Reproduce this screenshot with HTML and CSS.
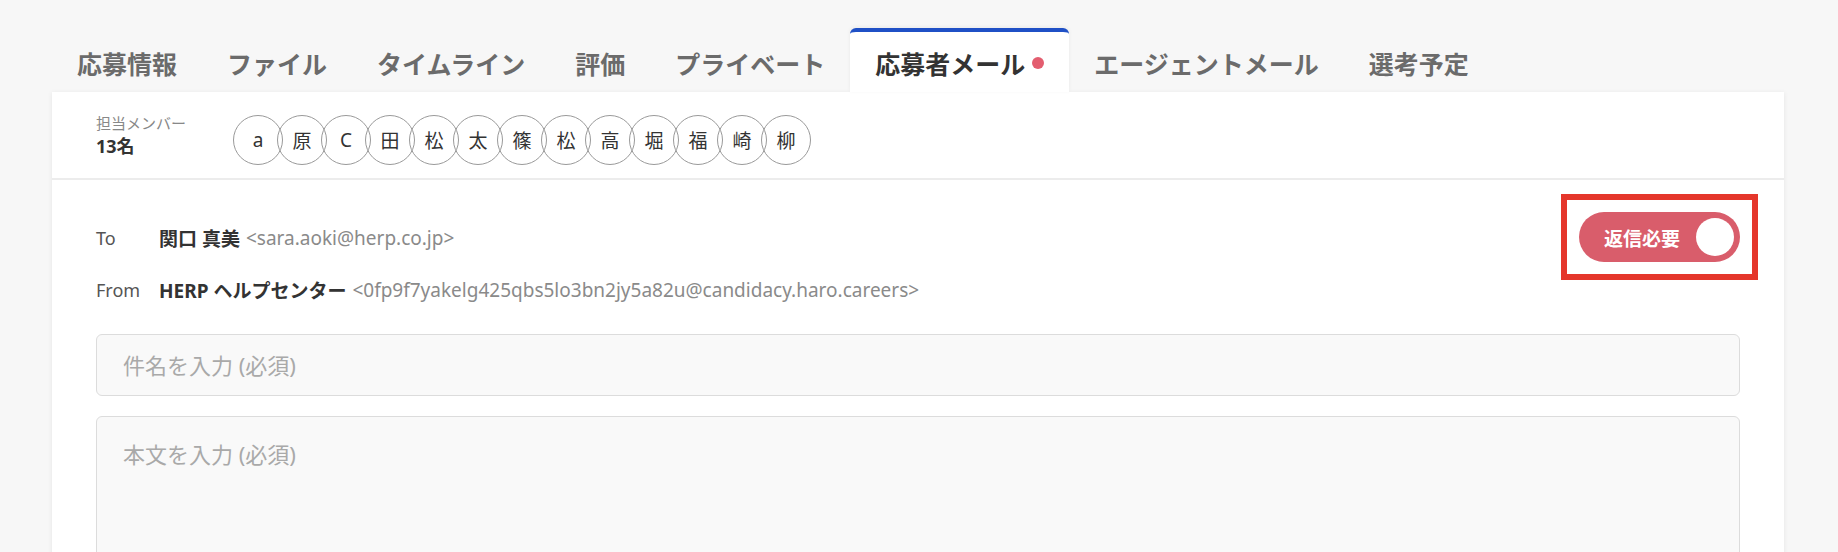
FILE: index.html
```html
<!DOCTYPE html>
<html lang="ja">
<head>
    <meta charset="UTF-8">
    <meta name="viewport" content="width=device-width, initial-scale=1.0">
    <title>応募者メール</title>
    <link rel="stylesheet" href="styles.css">
</head>
<body>
    <div class="page">
        <nav class="tabs">
            <a class="tab">応募情報</a>
            <a class="tab">ファイル</a>
            <a class="tab">タイムライン</a>
            <a class="tab">評価</a>
            <a class="tab">プライベート</a>
            <a class="tab active">応募者メール<span class="unread-dot"></span></a>
            <a class="tab">エージェントメール</a>
            <a class="tab">選考予定</a>
        </nav>

        <section class="card">
            <div class="members">
                <div class="members-label">
                    <span class="members-caption">担当メンバー</span>
                    <span class="members-count">13名</span>
                </div>
                <ul class="avatars">
                    <li class="avatar">a</li>
                    <li class="avatar">原</li>
                    <li class="avatar">C</li>
                    <li class="avatar">田</li>
                    <li class="avatar">松</li>
                    <li class="avatar">太</li>
                    <li class="avatar">篠</li>
                    <li class="avatar">松</li>
                    <li class="avatar">高</li>
                    <li class="avatar">堀</li>
                    <li class="avatar">福</li>
                    <li class="avatar">崎</li>
                    <li class="avatar">柳</li>
                </ul>
            </div>

            <div class="mail">
                <div class="mail-head">
                    <div class="addresses">
                        <div class="addr-row">
                            <span class="addr-label">To</span>
                            <span class="addr-name">関口 真美</span>
                            <span class="addr-email">&lt;sara.aoki@herp.co.jp&gt;</span>
                        </div>
                        <div class="addr-row">
                            <span class="addr-label">From</span>
                            <span class="addr-name">HERP ヘルプセンター</span>
                            <span class="addr-email">&lt;0fp9f7yakelg425qbs5lo3bn2jy5a82u@candidacy.haro.careers&gt;</span>
                        </div>
                    </div>
                    <div class="highlight">
                        <button class="reply-toggle">
                            <span>返信必要</span>
                            <span class="knob"></span>
                        </button>
                    </div>
                </div>

                <input class="field subject" type="text" placeholder="件名を入力 (必須)">
                <textarea class="field body-text" placeholder="本文を入力 (必須)"></textarea>
            </div>
        </section>
    </div>
</body>
</html>
```

FILE: styles.css
```css
:root {
    --bg: #f7f7f7;
    --card-bg: #ffffff;
    --text: #333333;
    --muted: #6b6b6b;
    --accent: #1f50c6;
    --alert: #d95d6b;
}

* {
    margin: 0;
    padding: 0;
    box-sizing: border-box;
}

body {
    font-family: "Noto Sans", "Noto Sans CJK JP", sans-serif;
    background: var(--bg);
    color: var(--text);
    overflow: hidden;
}

.page {
    padding: 28px 54px 0 52px;
}

/* タブ */
.tabs {
    display: flex;
}

.tab {
    height: 64px;
    padding: 2px 25px 0;
    border-top: 4px solid transparent;
    border-radius: 6px 6px 0 0;
    display: flex;
    align-items: center;
    font-family: "Noto Sans CJK JP", sans-serif;
    font-size: 25px;
    font-weight: 700;
    color: var(--muted);
    white-space: nowrap;
}

.tab.active {
    background: var(--card-bg);
    border-top-color: var(--accent);
    color: var(--text);
    box-shadow: 0 -1px 4px rgba(0,0,0,0.06);
    position: relative;
    z-index: 1;
}

.unread-dot {
    width: 12px;
    height: 12px;
    margin-left: 7px;
    border-radius: 50%;
    background: #e35d6f;
}

/* カード */
.card {
    background: var(--card-bg);
    min-height: 600px;
    box-shadow: 0 1px 5px rgba(0,0,0,0.08);
}

.members {
    height: 88px;
    padding: 2px 44px 0;
    border-bottom: 2px solid #ececec;
    display: flex;
    align-items: center;
}

.members-label {
    width: 137px;
    display: flex;
    flex-direction: column;
}

.members-caption {
    font-size: 15px;
    line-height: 20px;
    color: #888888;
}

.members-count {
    font-size: 18px;
    line-height: 26px;
    font-weight: 700;
}

.avatars {
    list-style: none;
    display: flex;
    padding-top: 7px;
}

.avatar {
    width: 50px;
    height: 50px;
    border: 1px solid #9a9a9a;
    border-radius: 50%;
    display: flex;
    align-items: center;
    justify-content: center;
    font-size: 19px;
    color: var(--text);
}

.avatar + .avatar {
    margin-left: -6px;
}

/* メール */
.mail {
    padding: 32px 44px 0;
}

.mail-head {
    display: flex;
    justify-content: space-between;
    align-items: flex-start;
    margin-bottom: 18px;
}

.addr-row {
    height: 52px;
    display: flex;
    align-items: center;
    font-size: 19px;
    white-space: nowrap;
}

.addr-label {
    width: 63px;
    font-size: 18px;
    color: #555555;
}

.addr-name {
    font-weight: 700;
    margin-right: 6px;
}

.addr-email {
    color: #8a8a8a;
}

/* 注目枠 */
.highlight {
    outline: 6px solid #e5362b;
    outline-offset: 12px;
}

.reply-toggle {
    width: 161px;
    height: 50px;
    border: none;
    border-radius: 25px;
    background: var(--alert);
    color: #ffffff;
    font-family: "Noto Sans CJK JP", sans-serif;
    font-size: 19px;
    font-weight: 700;
    padding: 0 6px 0 25px;
    display: flex;
    align-items: center;
    justify-content: space-between;
}

.knob {
    width: 38px;
    height: 38px;
    border-radius: 50%;
    background: #ffffff;
}

.field {
    display: block;
    width: 100%;
    border: 1px solid #dcdcdc;
    border-radius: 6px;
    background: #f9f9f9;
    font-family: "Noto Sans", "Noto Sans CJK JP", sans-serif;
    font-size: 22px;
    color: var(--text);
    padding: 0 26px;
}

.field::placeholder {
    color: #a9a9a9;
}

.subject {
    height: 62px;
    margin-bottom: 20px;
}

.body-text {
    height: 240px;
    padding-top: 20px;
    resize: none;
}
```
